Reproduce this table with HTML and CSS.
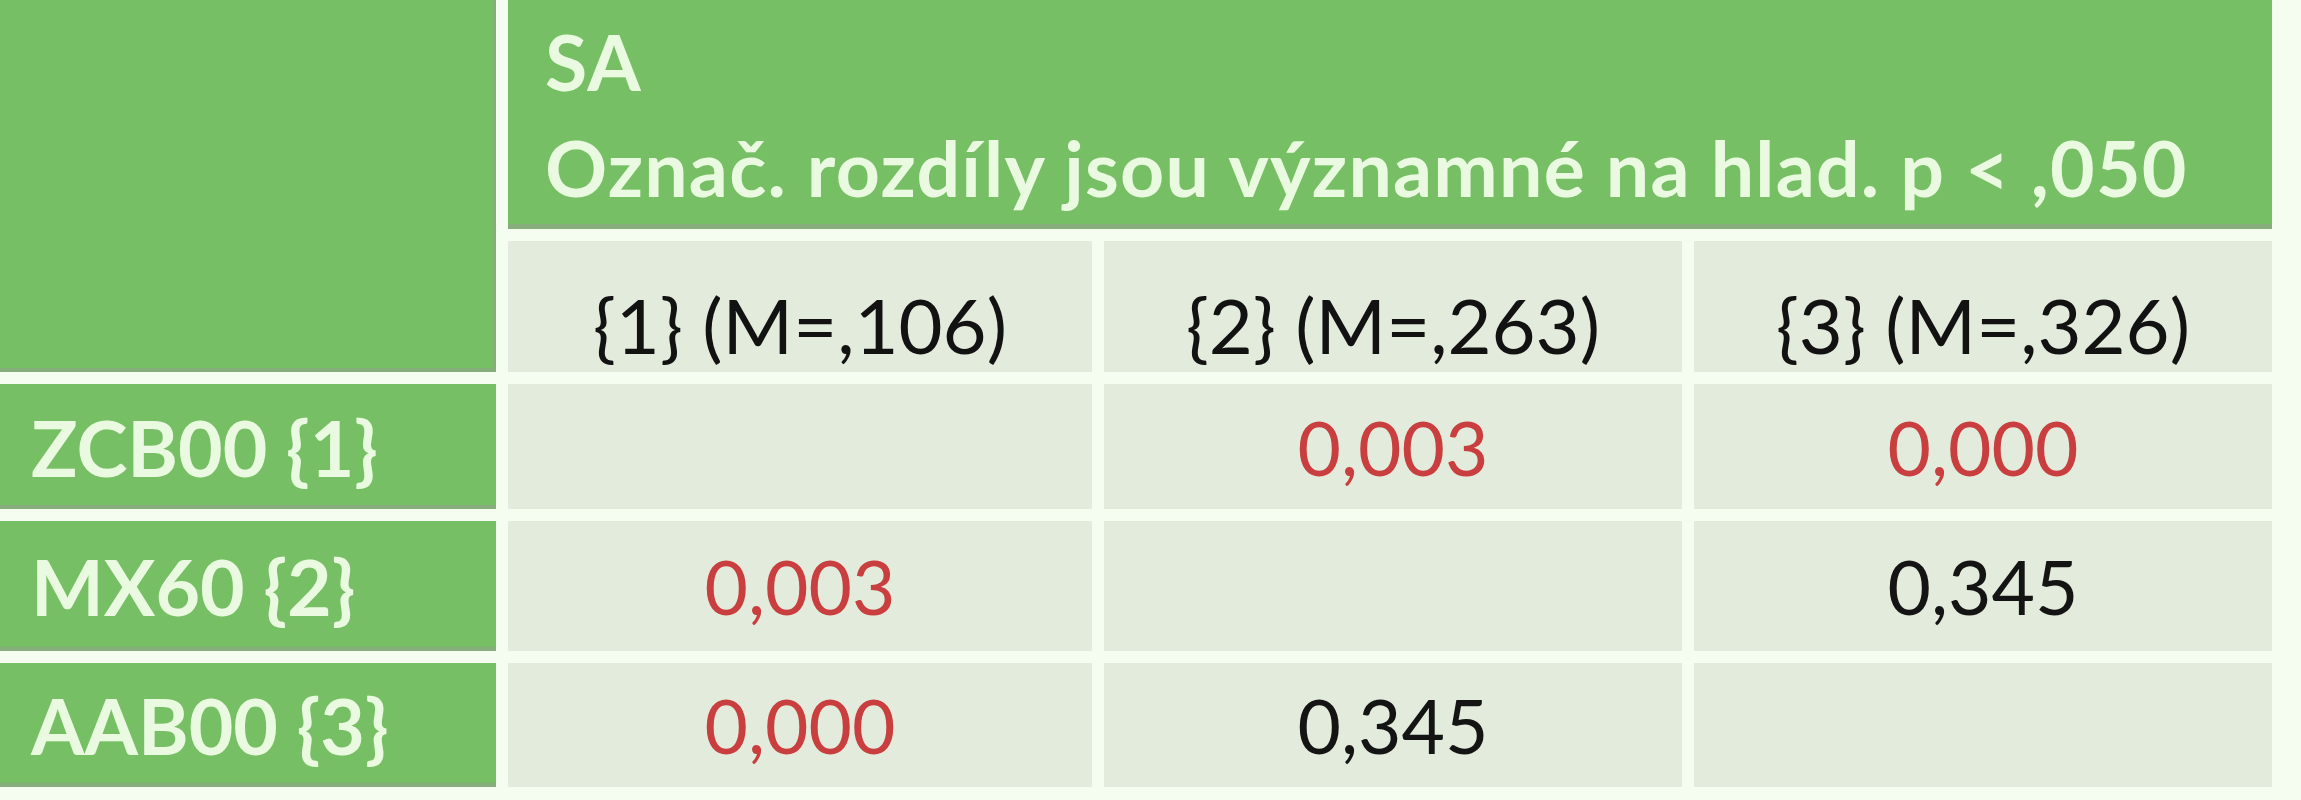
FILE: index.html
```html
<!DOCTYPE html>
<html lang="cs">
<head>
<meta charset="utf-8">
<title>SA</title>
<link rel="stylesheet" href="styles.css">
</head>
<body>
<div class="table">
  <div class="cell corner"></div>
  <div class="cell head">
    <div>SA</div>
    <div>Označ. rozdíly jsou významné na hlad. p &lt; ,050</div>
  </div>
  <div class="cell sub">{1} (M=,106)</div>
  <div class="cell sub">{2} (M=,263)</div>
  <div class="cell sub">{3} (M=,326)</div>

  <div class="cell label">ZCB00 {1}</div>
  <div class="cell val"></div>
  <div class="cell val red">0,003</div>
  <div class="cell val red">0,000</div>

  <div class="cell label">MX60 {2}</div>
  <div class="cell val red">0,003</div>
  <div class="cell val"></div>
  <div class="cell val">0,345</div>

  <div class="cell label">AAB00 {3}</div>
  <div class="cell val red">0,000</div>
  <div class="cell val">0,345</div>
  <div class="cell val"></div>
</div>
</body>
</html>
```
FILE: styles.css
```css
html, body {
  margin: 0;
  padding: 0;
  background: #f5fcf0;
}

body {
  width: 2301px;
  height: 800px;
  overflow: hidden;
  font-family: Lato, "Open Sans", "Liberation Sans", sans-serif;
}

.table {
  display: grid;
  grid-template-columns: 496px 584px 578px 578px;
  grid-template-rows: 229px 131px 125px 130px 124px;
  column-gap: 12px;
  row-gap: 12px;
}

.cell {
  box-sizing: border-box;
}

.corner {
  grid-row: 1 / span 2;
  grid-column: 1;
  background: #77bf64;
  box-shadow: inset -3px -4px 0 #86ae7a;
}

.head {
  grid-column: 2 / span 3;
  background: #77bf64;
  color: #e9fae0;
  font-weight: 700;
  font-size: 77px;
  letter-spacing: 1.2px;
  line-height: 106px;
  padding: 8px 0 0 37px;
  box-shadow: inset 0 -5px 0 #87ad7c;
}

.sub {
  background: #e3ebdc;
  color: #121212;
  font-size: 76px;
  display: flex;
  align-items: center;
  justify-content: center;
  padding-top: 36px;
}

.label {
  background: #77bf64;
  color: #e9fae0;
  font-weight: 700;
  font-size: 77px;
  display: flex;
  align-items: center;
  padding-left: 31px;
  box-shadow: inset 0 -4px 0 #87ad7c;
}

.val {
  background: #e3ecdc;
  color: #141414;
  font-size: 75px;
  display: flex;
  align-items: center;
  justify-content: center;
}

.red {
  color: #c93f3f;
}
```
